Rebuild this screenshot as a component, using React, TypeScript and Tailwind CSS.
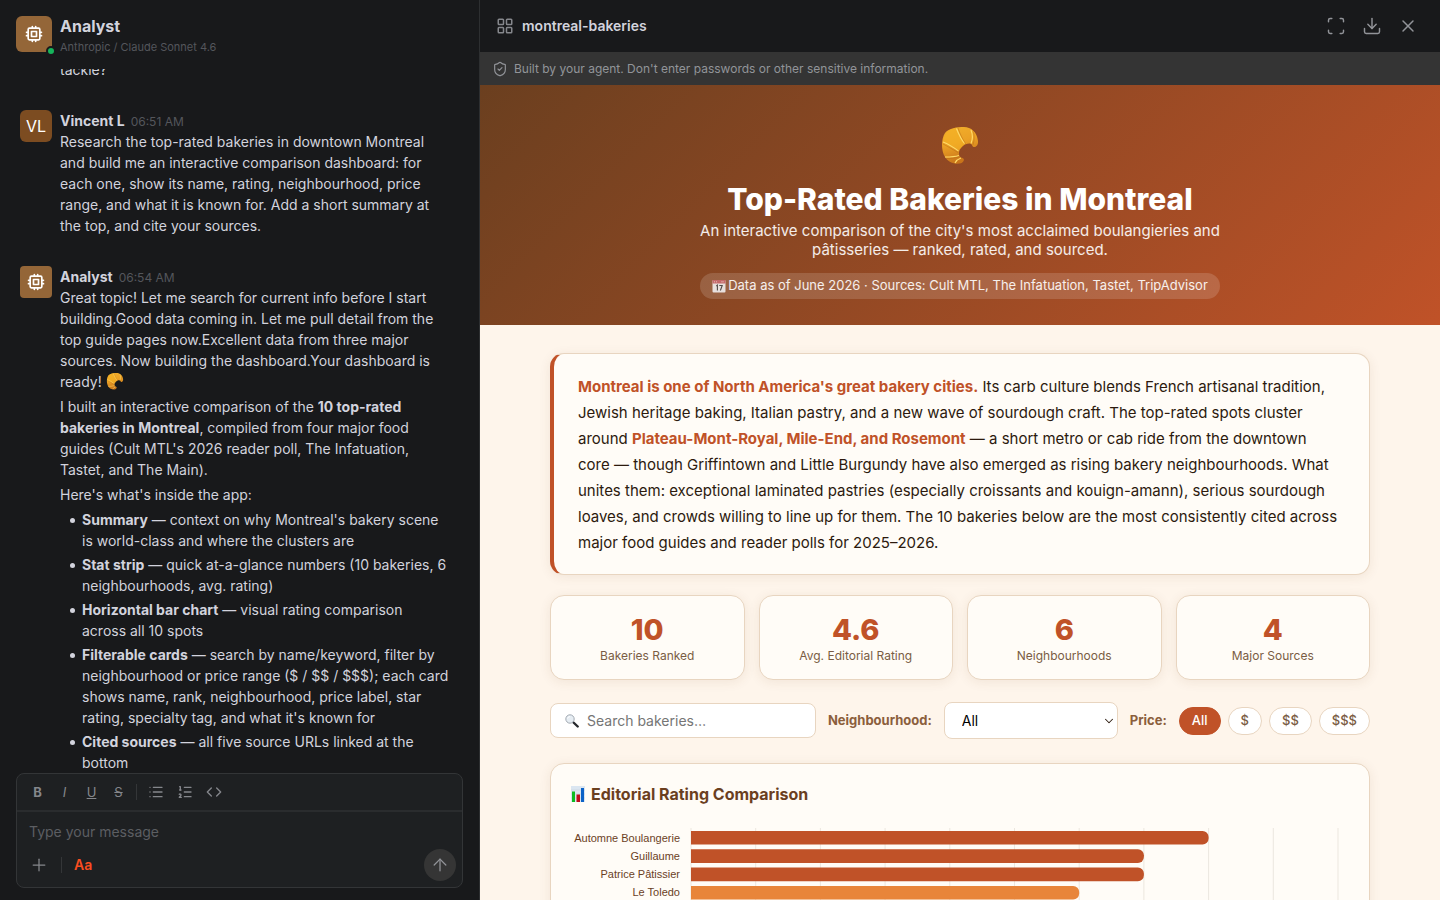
import type { ReactNode } from "react";
import { useState } from "react";
import { ArrowUp, ChevronDown, Code, Download, LayoutGrid, List, ListOrdered, Plus, Scan, ShieldCheck, X } from "lucide-react";

const STATS = [
  { value: "10", label: "Bakeries Ranked" },
  { value: "4.6", label: "Avg. Editorial Rating" },
  { value: "6", label: "Neighbourhoods" },
  { value: "4", label: "Major Sources" },
];

const PRICES = ["All", "$", "$$", "$$$"];

const RATINGS = [
  { name: "Automne Boulangerie", rating: 4.8 },
  { name: "Guillaume", rating: 4.7 },
  { name: "Patrice Pâtissier", rating: 4.7 },
  { name: "Le Toledo", rating: 4.6 },
];

const FEATURES = [
  { title: "Summary", text: "context on why Montreal's bakery scene is world-class and where the clusters are" },
  { title: "Stat strip", text: "quick at-a-glance numbers (10 bakeries, 6 neighbourhoods, avg. rating)" },
  { title: "Horizontal bar chart", text: "visual rating comparison across all 10 spots" },
  {
    title: "Filterable cards",
    text: "search by name/keyword, filter by neighbourhood or price range ($ / $$ / $$$); each card shows name, rank, neighbourhood, price label, star rating, specialty tag, and what it's known for",
  },
  { title: "Cited sources", text: "all five source URLs linked at the bottom" },
];

function ChipIcon() {
  return (
    <svg
      viewBox="0 0 24 24"
      className="size-5"
      fill="none"
      stroke="currentColor"
      strokeWidth="2"
      strokeLinecap="round"
      strokeLinejoin="round"
      aria-hidden="true"
    >
      <rect x="5" y="5" width="14" height="14" rx="1.500" />
      <path d="M9 9h6v6H9zM3 10h2M3 14h2M10 3v2M14 3v2M21 10h-2M21 14h-2M14 21v-2M10 21v-2" />
    </svg>
  );
}

function Croissant({ className }: { className: string }) {
  return (
    <svg viewBox="0 0 40 40" className={className} aria-hidden="true">
      <defs>
        <linearGradient id="crust" x1="0" y1="0" x2="0.3" y2="1">
          <stop offset="0" stopColor="#f2b02c" />
          <stop offset="0.5" stopColor="#eba125" />
          <stop offset="1" stopColor="#c8741a" />
        </linearGradient>
      </defs>
      <path
        d="M5 8C9 3 17 2 24 2C31 2 37 7 38 16C38.500 20 36 22.500 33.500 22C32 21.500 32.500 19 30 18.500C25 18 19 23 19 28C19 31.500 20.500 32.500 22.500 33C25 34 24 37 21 38.300C15 40 8 37 5 32C1 26 1 14 5 8Z"
        fill="url(#crust)"
      />
      <path d="M17 3L21 12L25 18.500L19 25L11 22L3 17C4 8 10 3 17 3Z" fill="#f5b324" opacity="0.6" />
      <path
        d="M16.500 3.500C19 10 21 14 24.500 18.500M31 5C33 10 32.500 15 31 18.500M3 17C8 19 13 22 18.500 26M5 32C9 32 14 32 19 30.500M15 38C16 36 18 34 21 33"
        fill="none"
        stroke="#ffd968"
        strokeWidth="1.200"
      />
      <path
        d="M18 3C20.500 10 22.500 14 25.500 18.500M3 19C7 21 12 24 18 27.500M6 33.500C10 34 15 33 19 32M33 6.500C35 11 34 16 33 20"
        fill="none"
        stroke="#b06414"
        strokeWidth="0.700"
        opacity="0.6"
      />
    </svg>
  );
}

function CalendarGlyph() {
  return (
    <svg viewBox="0 0 14 14" className="size-3.5" aria-hidden="true">
      <rect x="0.500" y="1" width="13" height="12.500" rx="1" fill="#e8e0de" />
      <path d="M0.500 4.500V1.500Q0.500 1 1 1H13Q13.500 1 13.500 1.500V4.500Z" fill="#c56a6c" />
      <path d="M2.500 2V3.500M4.500 2V3.500M9 2.800H12" stroke="#e8c5c0" strokeWidth="0.600" />
      <path d="M4.300 7L5.400 6.200V11.500M7.300 6.500H10.200L8.400 11.500" fill="none" stroke="#514a49" strokeWidth="1.100" />
    </svg>
  );
}

function MagnifierGlyph() {
  return (
    <svg viewBox="0 0 14 14" className="size-3.5" aria-hidden="true">
      <path d="M8.500 8.500L12.700 12.500" stroke="#25282c" strokeWidth="2.400" strokeLinecap="round" />
      <circle cx="5" cy="5" r="4.200" fill="#e6edf3" stroke="#9aa2aa" strokeWidth="0.900" />
      <path d="M2.500 4.500Q3 2.800 5 2.500" fill="none" stroke="#fff" strokeWidth="0.900" />
    </svg>
  );
}

function BarsGlyph() {
  return (
    <svg viewBox="0 0 14 16" className="h-4 w-3.5" aria-hidden="true">
      <rect width="14" height="16" fill="#dbe6f1" />
      <path d="M0 4H14M0 8H14M0 12H14" stroke="#c3cfdb" strokeWidth="0.500" />
      <rect x="1" y="5.500" width="3" height="10.500" fill="#0dbb22" />
      <rect x="5.500" y="8.500" width="3.500" height="7.500" fill="#c00d1c" />
      <rect x="10" y="2" width="3" height="14" fill="#0c62c7" />
    </svg>
  );
}

interface MessageProps {
  author: string;
  time: string;
  avatar: ReactNode;
  children: ReactNode;
}

function Message({ author, time, avatar, children }: MessageProps) {
  return (
    <article className="flex items-start gap-2">
      {avatar}
      <div className="min-w-0 flex-1">
        <h2 className="flex h-[21px] items-baseline gap-1.5">
          <span className="font-bold">{author}</span>
          <time className="text-xs leading-none text-[#54565b]">{time}</time>
        </h2>
        {children}
      </div>
    </article>
  );
}

function Composer() {
  return (
    <form className="mx-4 mb-3 rounded-lg border border-[#333537] bg-[#1e2022] text-[#85878c]">
      <div className="flex h-[38px] items-center border-b-2 border-[#2a2c2e] px-[7px] text-[13px]">
        <button type="button" aria-label="Bold" className="w-[27px] font-bold">B</button>
        <button type="button" aria-label="Italic" className="w-[27px] italic">I</button>
        <button type="button" aria-label="Underline" className="w-[27px] underline">U</button>
        <button type="button" aria-label="Strikethrough" className="w-[27px] line-through">S</button>
        <span className="mx-1 h-4 w-px bg-[#343638]" />
        <button type="button" aria-label="Bulleted list" className="flex w-[29px] justify-center"><List size={16} /></button>
        <button type="button" aria-label="Numbered list" className="flex w-[29px] justify-center"><ListOrdered size={16} /></button>
        <button type="button" aria-label="Code" className="flex w-[29px] justify-center"><Code size={16} /></button>
      </div>
      <textarea
        aria-label="Message"
        rows={1}
        placeholder="Type your message"
        className="block h-[37px] w-full resize-none px-3 pt-2.5 text-sm leading-5 outline-none placeholder:text-[#5c5e62]"
      />
      <div className="flex items-center pr-1.5 pb-1.5 pl-3">
        <button type="button" aria-label="Add attachment"><Plus size={20} strokeWidth={1.5} /></button>
        <span className="mx-3 h-4 w-px bg-[#343638]" />
        <button type="button" className="text-sm font-semibold text-[#fa4d20]">Aa</button>
        <button type="submit" aria-label="Send" className="ml-auto flex size-8 items-center justify-center rounded-full bg-[#353535] text-[#929499]">
          <ArrowUp size={20} strokeWidth={1.5} />
        </button>
      </div>
    </form>
  );
}

function ChatPanel() {
  return (
    <aside className="flex w-1/3 shrink-0 flex-col border-r border-[#2d2f31] bg-[#18191b] text-sm leading-[21px] text-[#d2d3dd]">
      <header className="flex h-[69px] shrink-0 items-start gap-2 px-4 pt-4">
        <div className="relative flex size-9 items-center justify-center rounded-md bg-[#946638] text-white">
          <ChipIcon />
          <span className="absolute -right-1 -bottom-1 size-2.5 rounded-full border-2 border-[#18191b] bg-[#16b45b]" />
        </div>
        <div>
          <h1 className="text-base leading-[21px] font-bold">Analyst</h1>
          <p className="text-[11px] leading-5 text-[#54565b]">Anthropic / Claude Sonnet 4.6</p>
        </div>
      </header>

      <div className="flex min-h-0 flex-1 flex-col justify-end gap-[30px] overflow-hidden pr-[30px] pl-5">
        <p className="pl-10">tackle?</p>
        <Message
          author="Vincent L"
          time="06:51 AM"
          avatar={<div className="flex size-8 items-center justify-center rounded-md bg-[#7c4c21] text-base text-white">VL</div>}
        >
          <p>
            Research the top-rated bakeries in downtown Montreal and build me an interactive comparison dashboard: for each
            one, show its name, rating, neighbourhood, price range, and what it is known for. Add a short summary at the top,
            and cite your sources.
          </p>
        </Message>
        <Message
          author="Analyst"
          time="06:54 AM"
          avatar={
            <div className="flex size-8 items-center justify-center rounded-sm bg-[#946638] text-white">
              <ChipIcon />
            </div>
          }
        >
          <div className="flex flex-col gap-1">
            <p>
              Great topic! Let me search for current info before I start building.Good data coming in. Let me pull detail from
              the top guide pages now.Excellent data from three major sources. Now building the dashboard.Your dashboard is
              ready! <Croissant className="inline size-[18px] align-text-bottom" />
            </p>
            <p>
              I built an interactive comparison of the <strong className="font-bold">10 top-rated bakeries in Montreal</strong>,
              compiled from four major food guides (Cult MTL's 2026 reader poll, The Infatuation, Tastet, and The Main).
            </p>
            <p>Here's what's inside the app:</p>
            <ul className="flex flex-col gap-[3px] pl-2.5">
              {FEATURES.map((feature) => (
                <li key={feature.title} className="flex gap-[7px]">
                  <span className="mt-[9px] size-[5px] shrink-0 rounded-full bg-[#d2d3dd]" />
                  <p>
                    <strong className="font-bold">{feature.title}</strong> — {feature.text}
                  </p>
                </li>
              ))}
            </ul>
          </div>
        </Message>
      </div>
      <Composer />
    </aside>
  );
}

const PLOT_LEFT = 120;
const STEP = 64.7;

function RatingChart() {
  return (
    <svg viewBox="0 0 778 90" className="w-full" role="img" aria-label="Editorial rating by bakery">
      {Array.from({ length: 11 }, (_, i) => (
        <path key={i} d={`M${PLOT_LEFT + i * STEP} 0V90`} stroke="#ece7df" strokeWidth="1" />
      ))}
      {RATINGS.map((row, i) => {
        const y = 3 + i * 18.3;
        const end = PLOT_LEFT + (row.rating - 4) * 10 * STEP;
        return (
          <g key={row.name}>
            <path
              d={`M${PLOT_LEFT} ${y}H${end - 6}a6 6 0 0 1 6 6v1.600a6 6 0 0 1 -6 6H${PLOT_LEFT}Z`}
              fill={row.rating >= 4.7 ? "#c05228" : "#e8853a"}
            />
            <text x="109" y={y + 10.5} textAnchor="end" fill="#6b3f1f" fontSize="11" fontFamily="Liberation Sans, Arial, sans-serif">
              {row.name}
            </text>
          </g>
        );
      })}
    </svg>
  );
}

function Dashboard() {
  const [price, setPrice] = useState("All");
  const card = "border border-[#e8d5c0] bg-[#fffcf7] rounded-[14px] shadow-[0_2px_12px_rgba(107,63,31,0.09)]";

  return (
    <div className="min-h-0 flex-1 overflow-hidden bg-[#fef5eb] text-[#2c1a0e]">
      <header className="flex h-60 flex-col items-center bg-linear-135 from-[#6b3f1f] to-[#c05228] pt-10 text-center text-white">
        <Croissant className="size-10" />
        <h1 className="mt-4 text-[30px] leading-9 font-extrabold">Top-Rated Bakeries in Montreal</h1>
        <p className="mt-1 max-w-[560px] text-[15px] leading-[19px] text-white/90">
          An interactive comparison of the city's most acclaimed boulangieries and pâtisseries — ranked, rated, and sourced.
        </p>
        <p className="mt-3.5 flex h-[26px] items-center gap-0.5 rounded-full bg-white/15 px-3 text-[13px] text-white/90">
          <CalendarGlyph />
          Data as of June 2026 · Sources: Cult MTL, The Infatuation, Tastet, TripAdvisor
        </p>
      </header>

      <main className="mx-auto max-w-[820px] pt-7">
        <section className={`${card} border-l-4 border-l-[#c05228] pt-5 pr-[30px] pb-[18px] pl-6 text-[15px] leading-[26px]`}>
          <strong className="text-[#c05228]">Montreal is one of North America's great bakery cities.</strong> Its carb culture
          blends French artisanal tradition, Jewish heritage baking, Italian pastry, and a new wave of sourdough craft. The
          top-rated spots cluster around <strong className="text-[#c05228]">Plateau-Mont-Royal, Mile-End, and Rosemont</strong> — a
          short metro or cab ride from the downtown core — though Griffintown and Little Burgundy have also emerged as rising
          bakery neighbourhoods. What unites them: exceptional laminated pastries (especially croissants and kouign-amann),
          serious sourdough loaves, and crowds willing to line up for them. The 10 bakeries below are the most consistently
          cited across major food guides and reader polls for 2025–2026.
        </section>

        <dl className="mt-5 grid grid-cols-4 gap-3.5">
          {STATS.map((stat) => (
            <div key={stat.label} className={`${card} flex h-[85px] flex-col-reverse items-center justify-center pt-1`}>
              <dt className="text-xs leading-5 text-[#7a5c44]">{stat.label}</dt>
              <dd className="text-[29px] leading-8 font-extrabold text-[#c05228]">{stat.value}</dd>
            </div>
          ))}
        </dl>

        <div className="mt-[22px] flex items-center gap-3 text-[13px]">
          <label className="flex h-[35px] min-w-0 flex-1 items-center gap-2 rounded-lg border border-[#e8d5c0] bg-white px-3.5">
            <MagnifierGlyph />
            <input aria-label="Search bakeries" placeholder="Search bakeries…" className="min-w-0 flex-1 text-sm outline-none placeholder:text-[#757575]" />
          </label>
          <label htmlFor="area" className="font-bold text-[#8b5e3c]">Neighbourhood:</label>
          <div className="relative">
            <select id="area" className="h-[37px] w-[174px] appearance-none rounded-lg border border-[#e8d5c0] bg-white pl-[17px] text-sm text-black">
              <option>All</option>
            </select>
            <ChevronDown size={14} strokeWidth={1.75} className="pointer-events-none absolute top-3 right-0.5 text-[#2c1a0e]" />
          </div>
          <span className="font-bold text-[#8b5e3c]">Price:</span>
          <div className="flex gap-[7px]">
            {PRICES.map((p) => (
              <button
                key={p}
                type="button"
                onClick={() => setPrice(p)}
                className={`h-7 rounded-full border px-3 font-medium ${
                  p === price ? "border-[#c05228] bg-[#c05228] text-white" : "border-[#e8d5c0] bg-white text-[#7a5c44]"
                }`}
              >
                {p}
              </button>
            ))}
          </div>
        </div>

        <section className={`${card} mt-6 px-5 pt-5`}>
          <h2 className="mb-6 flex items-center gap-1.5 text-base leading-5 font-bold text-[#6b3f1f]">
            <BarsGlyph />
            Editorial Rating Comparison
          </h2>
          <RatingChart />
        </section>
      </main>
    </div>
  );
}

export default function App() {
  return (
    <div className="flex h-screen overflow-hidden font-['Inter',sans-serif]">
      <ChatPanel />
      <section className="flex min-w-0 flex-1 flex-col">
        <header className="flex h-[52px] shrink-0 items-center gap-2 bg-[#18191b] px-4 text-sm font-semibold text-[#d2d3dd]">
          <LayoutGrid size={18} className="text-[#85878c]" />
          montreal-bakeries
          <div className="ml-auto flex items-center gap-4 pr-1.5 text-[#929499]">
            <button type="button" aria-label="Full screen"><Scan size={20} strokeWidth={1.75} /></button>
            <button type="button" aria-label="Download"><Download size={20} strokeWidth={1.75} /></button>
            <button type="button" aria-label="Close"><X size={20} strokeWidth={1.75} /></button>
          </div>
        </header>
        <p className="flex h-[33px] shrink-0 items-center gap-1.5 bg-[#343434] px-3 text-xs text-[#929499]">
          <ShieldCheck size={16} strokeWidth={1.75} />
          Built by your agent. Don't enter passwords or other sensitive information.
        </p>
        <Dashboard />
      </section>
    </div>
  );
}
